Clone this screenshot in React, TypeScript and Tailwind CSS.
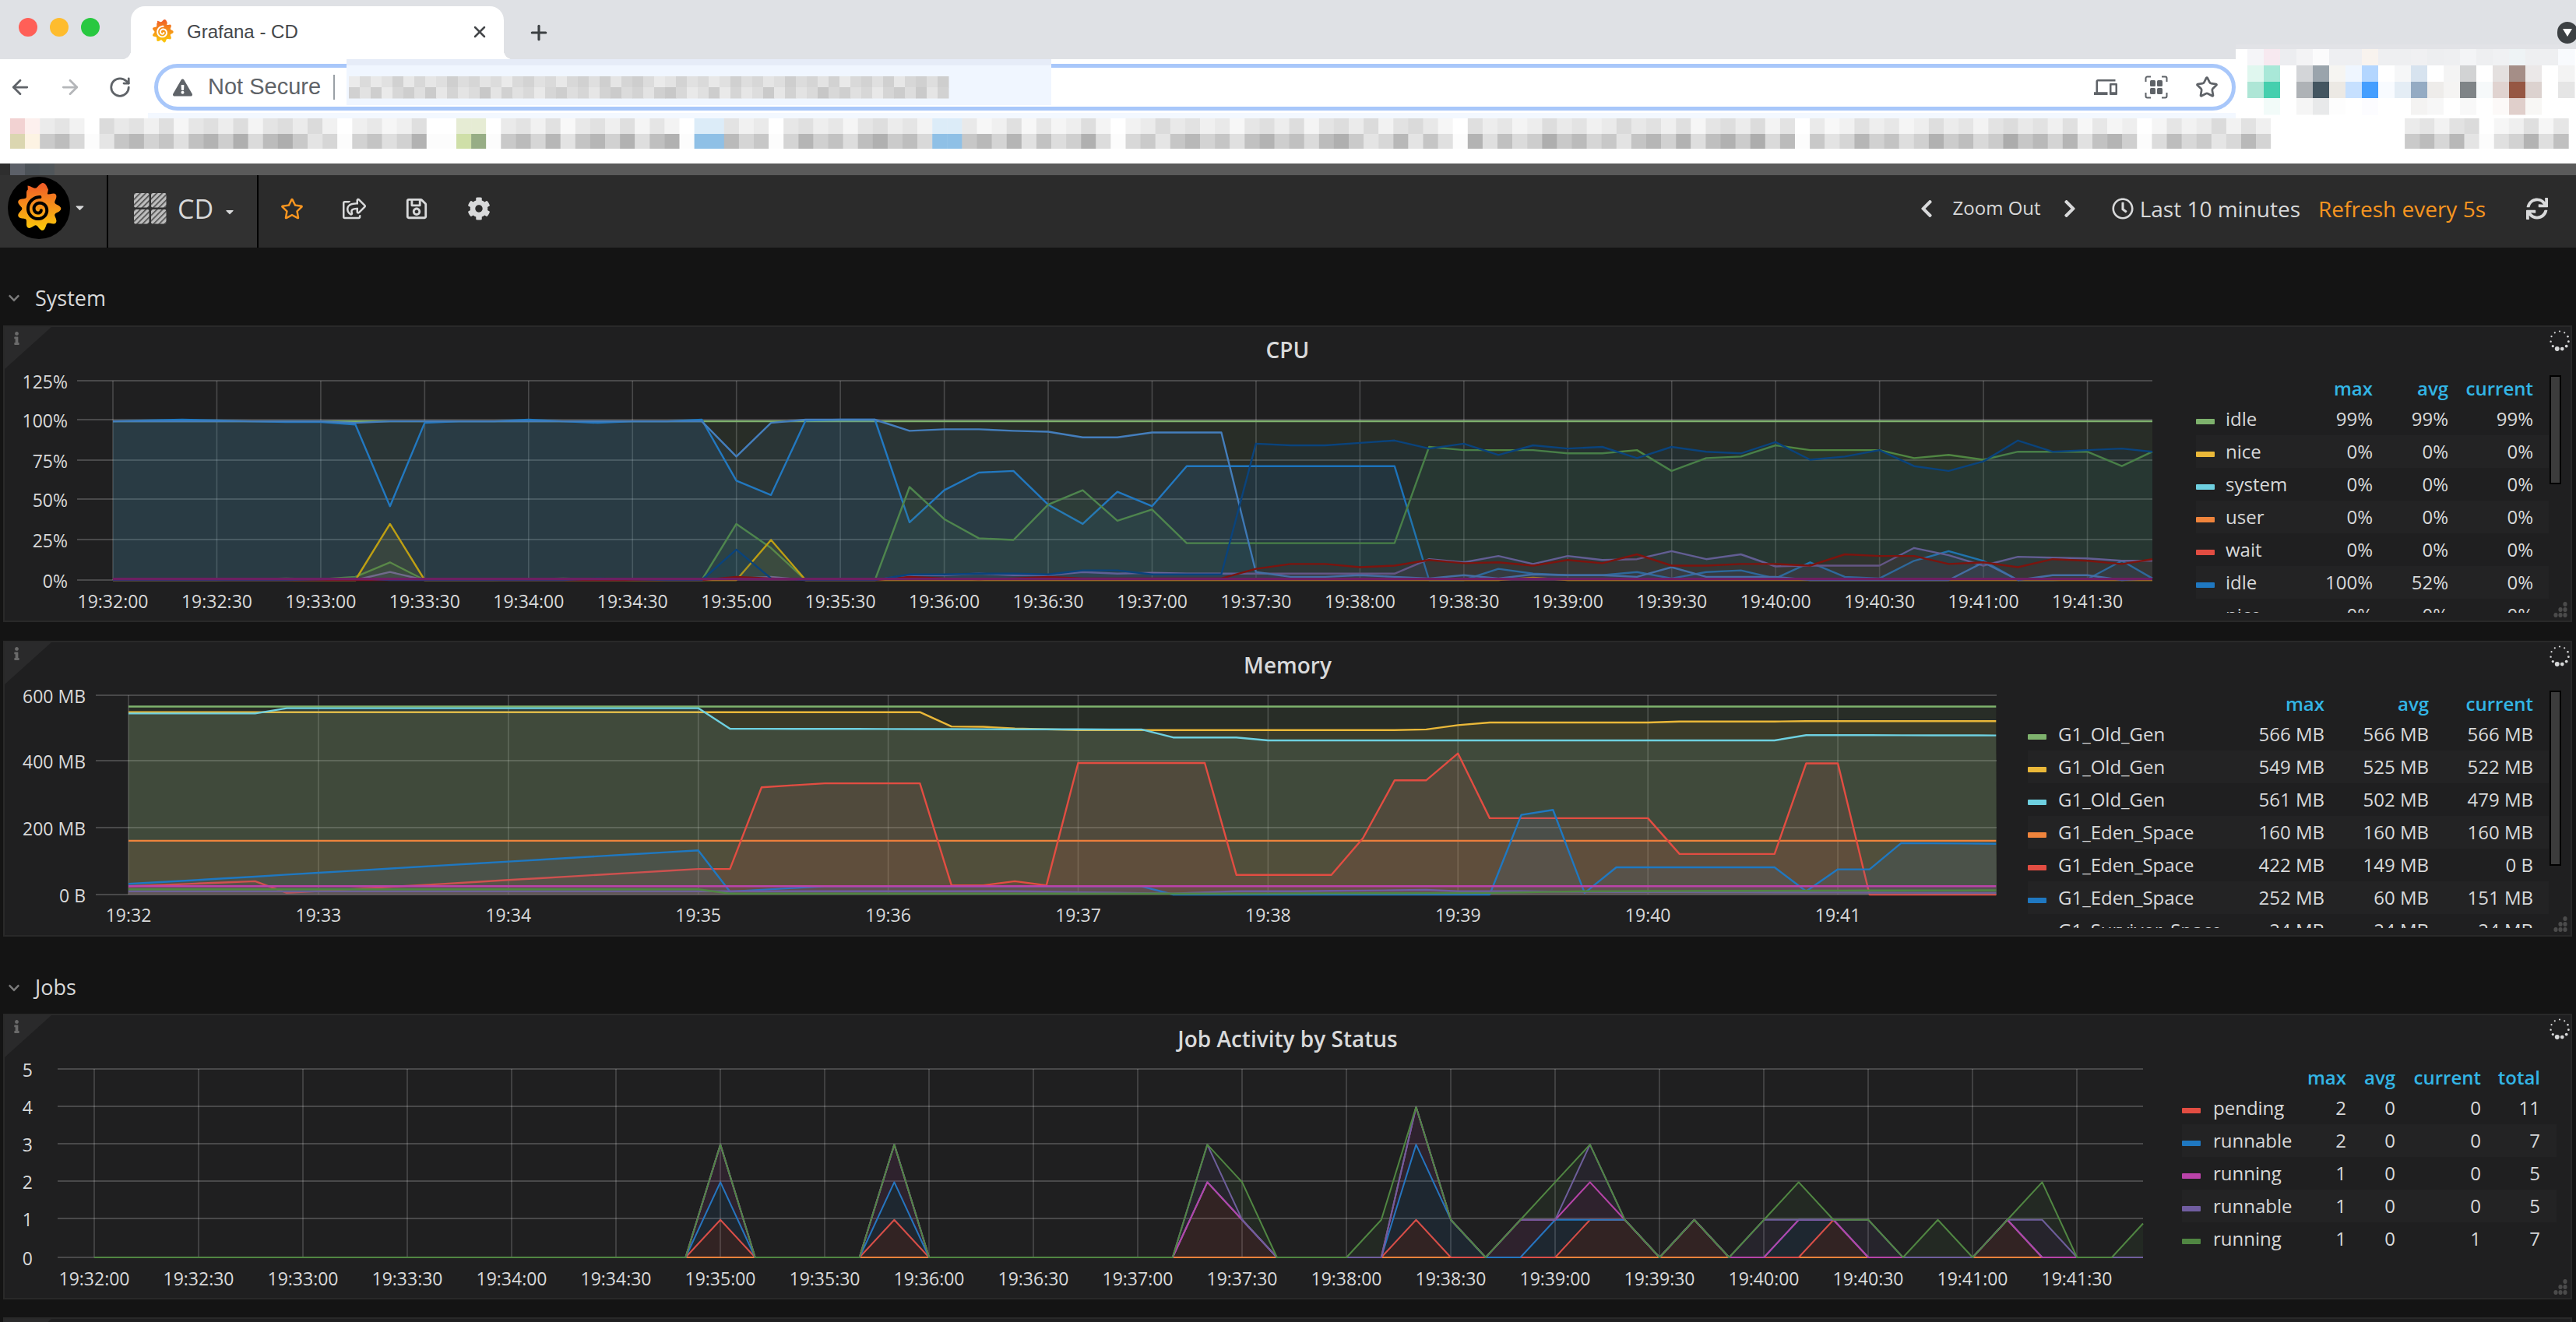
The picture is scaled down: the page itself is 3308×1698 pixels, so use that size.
import React from "react";
import {
  FaRegStar, FaRegShareSquare, FaRegSave, FaCog, FaChevronLeft, FaChevronRight,
  FaRegClock, FaSync, FaCaretDown, FaInfo, FaChevronDown, FaExclamationTriangle,
} from "react-icons/fa";
import { MdDevices } from "react-icons/md";
import { ArrowLeft, ArrowRight, RotateCw, X, Plus, Star } from "lucide-react";

const h = (i: number) => ((i * 2654435761) >>> 0) % 1000 / 1000;
const gray = (v: number) => {
  const c = Math.max(0, Math.min(255, Math.round(v)));
  return `rgb(${c},${c},${c})`;
};

/* piecewise linear series: flat list of n,value pairs */
const lin = (...p: number[]) => {
  const out: number[] = [];
  for (let n = 0; n < 60; n++) {
    let v = p[p.length - 1];
    for (let k = 0; k + 2 < p.length; k += 2) {
      if (n >= p[k] && n <= p[k + 2]) {
        v = p[k + 1] + ((p[k + 3] - p[k + 1]) * (n - p[k])) / (p[k + 2] - p[k] || 1);
        break;
      }
    }
    out.push(v);
  }
  return out;
};
const seq = (start: number, vals: number[]) => vals.flatMap((v, i) => [start + i, v]);

type Series = { c: string; v: number[]; w?: number };

const cpuSeries: Series[] = [
  { c: "#7EB26D", v: lin(0, 99, 59, 99) },
  { c: "#1F78C1", v: lin(...seq(0, [99, 99.5, 100, 99.5, 99, 98.5, 98.5, 97, 46, 98, 99, 99, 100, 99, 98, 99, 99, 100, 62, 53, 99.5, 100, 100, 36, 56, 67, 68, 47, 35, 55, 46, 71, 71, 71, 71, 71, 71, 71, 0, 0, 7, 4, 3, 3, 5, 1, 5, 6, 1, 11, 2, 1, 12, 18, 12, 0, 0, 0.5, 12, 1])) },
  { c: "#705DA0", v: lin(...seq(0, [0, 0, 0, 0, 0, 0, 0, 0, 5, 0, 0, 0, 0, 0, 0, 0, 0, 0, 1, 2, 0, 0, 0, 3, 3, 4, 3, 3, 5, 4, 4.5, 4, 4, 4, 4, 4, 4, 4, 13, 11, 15, 10, 15, 12.5, 13, 18, 13, 16, 8.5, 9, 9, 9, 20, 15.5, 9, 14.5, 14, 13.5, 12, 12])) },
  { c: "#508642", v: lin(...seq(0, [0, 0, 0, 0, 0.5, 1, 0.5, 2, 11, 0, 0, 0, 0.5, 1, 0.5, 0, 0, 0, 35, 20, 0, 0, 0, 58, 38, 26, 25, 47, 56, 37, 44, 23, 23, 23, 23, 23, 23, 23, 83, 81, 81, 81, 79, 79, 81, 68, 76, 77, 84, 81, 81, 81, 76, 78, 75, 80, 80, 80, 71, 80])) },
  { c: "#CCA300", v: lin(...seq(0, [0, 0, 0, 0, 0, 0, 0, 0, 35, 0, 0, 0, 0, 0, 0, 0, 0, 0, 0, 25, 0, 0, 0, 0, 0, 0, 0, 0, 0, 0, 0, 0, 0, 0, 0, 0, 0, 0, 0, 0, 0, 1.5, 0, 0, 0, 0, 0, 0, 0, 0, 0, 0, 0, 0, 0, 0, 0, 0, 0, 0])) },
  { c: "#447EBC", v: lin(...seq(0, [99, 99, 99, 99, 99, 99, 99, 98, 99, 99, 99, 99, 99, 99, 99, 99, 99, 99, 77, 98, 100, 100, 100, 93, 94, 94, 93, 92.5, 89, 89, 92, 92, 92, 5, 2, 2, 3, 2, 1, 3, 1, 3.5, 3, 3, 2, 8, 2, 2, 2, 0, 0, 0, 0, 0, 11, 0, 3, 3, 0, 1])) },
  { c: "#890F02", v: lin(...seq(0, [0, 0, 0, 0, 0, 0, 0, 0, 0, 0, 0, 0, 0, 0, 0, 0, 0, 0, 2, 1, 0, 0, 0, 2, 1, 0.5, 1, 2, 1, 1, 1, 1, 1, 7, 10, 10, 8, 9, 12.5, 10.5, 11, 9, 12.5, 10.5, 16, 9, 9, 10, 10, 9, 16, 15, 15, 10, 11, 8, 13, 12, 10, 13])) },
  { c: "#0A437C", v: lin(...seq(0, [0, 0, 0, 0, 0, 0, 0.5, 1, 0, 0, 0, 0, 0, 0, 1, 0.5, 0, 0, 19, 1, 0, 0, 0, 3.5, 3.5, 4, 4, 3.5, 6, 6, 3.5, 3.5, 3.5, 85, 84, 84, 85.5, 87, 82, 85, 78, 84, 82, 83, 76, 83, 80, 79, 86, 75, 77, 81, 71, 68, 74, 87, 80, 81, 82, 80])) },
  { c: "#6D1F62", v: lin(0, 0.6, 59, 0.6), w: 3.5 },
];

const memSeries: Series[] = [
  { c: "#7EB26D", v: lin(0, 566, 59, 566) },
  { c: "#EAB839", v: lin(0, 549, 25, 549, 26, 506, 27, 505, 28, 500, 30, 495, 40, 495, 41, 497, 42, 510, 43, 518, 48, 518, 49, 521, 52, 521, 53, 522, 59, 522) },
  { c: "#6ED0E0", v: lin(0, 545, 4, 545, 5, 561, 18, 561, 19, 499, 32, 497, 33, 473, 35, 473, 36, 464, 52, 464, 53, 480, 59, 479) },
  { c: "#EF843C", v: lin(0, 162, 59, 162) },
  { c: "#E24D42", v: lin(0, 25, 4, 40, 5, 5, 18, 77, 19, 77, 20, 323, 22, 335, 25, 335, 26, 28, 27, 28, 28, 40, 29, 28, 30, 396, 34, 396, 35, 59, 38, 59, 39, 170, 40, 344, 41, 344, 42, 425, 43, 230, 48, 230, 49, 122, 52, 122, 53, 395, 54, 395, 55, 0, 59, 0) },
  { c: "#1F78C1", v: lin(0, 32, 4, 54, 5, 60, 18, 133, 19, 9, 22, 25, 32, 25, 33, 0, 43, 0, 44, 240, 45, 255, 46, 5, 47, 82, 52, 82, 53, 10, 54, 76, 55, 76, 56, 155, 59, 153) },
  { c: "#BA43A9", v: lin(0, 25, 59, 25) },
  { c: "#705DA0", v: lin(0, 10, 28, 10, 33, 3, 35, 10, 37, 10, 41, 14, 42, 10, 44, 10, 46, 8, 59, 5) },
  { c: "#508642", v: lin(0, 16, 18, 16, 19, 3, 35, 3, 43, 5, 46, 10, 59, 13) },
];

const J: Record<number, number[]> = {
  18: [1, 2, 3, 3, 3], 23: [1, 2, 3, 3, 3], 32: [2, 2, 2, 3, 3], 33: [1, 1, 1, 1, 2], 37: [0, 0, 0, 0, 1],
  38: [1, 3, 4, 4, 4], 39: [0, 1, 1, 1, 1], 41: [0, 0, 1, 1, 1], 42: [0, 1, 1, 1, 2], 43: [1, 1, 2, 3, 3],
  44: [1, 1, 1, 1, 1], 46: [1, 1, 1, 1, 1], 48: [0, 0, 0, 1, 1], 49: [0, 1, 1, 1, 2], 50: [1, 1, 1, 1, 1],
  51: [0, 0, 0, 1, 1], 53: [0, 0, 0, 0, 1], 55: [1, 1, 1, 1, 1], 56: [0, 0, 0, 1, 2], 59: [0, 0, 0, 0, 0.9],
};
const jv = (k: number) => Array.from({ length: 60 }, (_, n) => (J[n] ? J[n][k] : 0));
const jobSeries: Series[] = [
  { c: "#EF843C", v: jv(0).map(() => 0) },
  { c: "#E24D42", v: jv(0) },
  { c: "#1F78C1", v: jv(1) },
  { c: "#BA43A9", v: jv(2) },
  { c: "#705DA0", v: jv(3) },
  { c: "#508642", v: jv(4) },
];

type ChartProps = {
  left: number; top: number; width: number; height: number;
  x0: number; step: number; y0: number; perUnit: number; xEnd: number; gridLeft: number;
  hTicks: [number, string][]; vFirst: number; vStep: number; vLabels: string[];
  labelY: number; yLabelX: number; series: Series[]; sw: number; stacked?: boolean;
};

function Chart(p: ChartProps) {
  const gridTop = Math.min(...p.hTicks.map((t) => t[0]));
  const toPts = (s: Series) =>
    s.v.map((v, n) => `${Math.min(p.x0 + n * p.step, p.xEnd).toFixed(1)},${(p.y0 - v * p.perUnit).toFixed(1)}`);
  return (
    <svg width={p.width} height={p.height} viewBox={`${p.left} ${p.top} ${p.width} ${p.height}`} className="block shrink-0 overflow-visible">
      {p.hTicks.map(([y]) => (
        <line key={y} x1={p.gridLeft} x2={p.xEnd} y1={y} y2={y} stroke="#fff" strokeOpacity={0.19} strokeWidth={2} />
      ))}
      {p.vLabels.map((_, i) => {
        const x = p.vFirst + i * p.vStep;
        return <line key={i} x1={x} x2={x} y1={gridTop} y2={p.y0} stroke="#fff" strokeOpacity={0.19} strokeWidth={1.6} />;
      })}
      {p.series.map((s, i) => {
        const pts = toPts(s);
        const lower = p.stacked && i > 0 ? toPts(p.series[i - 1]).reverse().join(" ") : `${p.xEnd},${p.y0} ${p.x0},${p.y0}`;
        return (
          <g key={i}>
            <polygon points={`${pts.join(" ")} ${lower}`} fill={s.c} fillOpacity={0.1} />
            <polyline points={pts.join(" ")} fill="none" stroke={s.c} strokeWidth={s.w ?? p.sw} strokeLinejoin="round" />
          </g>
        );
      })}
      {p.hTicks.map(([y, t]) => (
        <text key={t} x={p.yLabelX} y={y + 1} textAnchor="end" dominantBaseline="central" fontSize={23} fill="#d8d9da">{t}</text>
      ))}
      {p.vLabels.map((t, i) => (
        <text key={t} x={p.vFirst + i * p.vStep} y={p.labelY} textAnchor="middle" dominantBaseline="central" fontSize={23} fill="#d8d9da">{t}</text>
      ))}
    </svg>
  );
}

const secLabels = ["19:32:00", "19:32:30", "19:33:00", "19:33:30", "19:34:00", "19:34:30", "19:35:00", "19:35:30", "19:36:00", "19:36:30", "19:37:00", "19:37:30", "19:38:00", "19:38:30", "19:39:00", "19:39:30", "19:40:00", "19:40:30", "19:41:00", "19:41:30"];
const minLabels = ["19:32", "19:33", "19:34", "19:35", "19:36", "19:37", "19:38", "19:39", "19:40", "19:41"];

type Row = { c: string; name: string; vals: string[] };

function Legend({ grid, headers, rows, widthClass, heightClass }: { grid: string; headers: string[]; rows: Row[]; widthClass: string; heightClass: string }) {
  return (
    <div className={`${widthClass} ${heightClass} shrink-0 overflow-hidden text-[24px] leading-none whitespace-nowrap`}>
      <div className={`${grid} h-[37px] items-center font-semibold text-[#33b5e5] text-right`}>
        <span />
        <span />
        {headers.map((t) => <span key={t}>{t}</span>)}
      </div>
      {rows.map((r, i) => (
        <div key={i} className={`${grid} h-[42px] items-center text-[#d8d9da] ${i % 2 === 1 ? "bg-[#232324]" : ""}`}>
          <span className="block w-6 h-[7px] rounded-[1px] mt-[7px]" style={{ backgroundColor: r.c }} />
          <span>{r.name}</span>
          {r.vals.map((v, k) => <span key={k} className="text-right">{v}</span>)}
        </div>
      ))}
    </div>
  );
}

function Scrollbar({ className }: { className: string }) {
  return <div className={`w-[15px] shrink-0 bg-[#3c3c3c] border-2 border-black ${className}`} />;
}

function Spinner() {
  return (
    <svg width="28" height="28" viewBox="-14 -14 28 28" className="absolute top-[3px] right-0">
      {Array.from({ length: 11 }, (_, i) => {
        const a = (i / 11) * Math.PI * 2 - Math.PI / 2;
        const r = [1.1, 1.1, 1.3, 1.4, 1.9, 2.4, 3, 1.6, 1.2, 1.1, 1.1][i];
        return <circle key={i} cx={Math.cos(a) * 11.5} cy={Math.sin(a) * 11.5} r={r} fill="#d8d9da" />;
      })}
    </svg>
  );
}

function ResizeDots() {
  return (
    <svg width="20" height="22" viewBox="0 0 20 22" className="absolute bottom-[2px] right-[2px]">
      {[[15, 3], [15, 10], [9, 10], [15, 17], [9, 17], [3, 17]].map(([x, y], i) => (
        <ellipse key={i} cx={x} cy={y} rx={2.6} ry={3} fill="#4b4b4b" />
      ))}
    </svg>
  );
}

function Corner() {
  return (
    <div className="absolute top-0 left-0">
      <svg width="60" height="54" viewBox="0 0 60 54" className="block">
        <polygon points="0,0 60,0 0,54" fill="#2a2a2b" />
      </svg>
      <FaInfo size={17} color="#6a6a6a" className="absolute top-[6px] left-[7px]" />
    </div>
  );
}

function Panel({ className, title, titleClass, children }: { className: string; title: string; titleClass: string; children: React.ReactNode }) {
  return (
    <div className={`relative ml-1 mr-[5px] bg-[#1f1f20] border-2 border-[#292929] ${className}`}>
      <Corner />
      <Spinner />
      <ResizeDots />
      <div className={`flex items-center justify-center font-semibold text-[28px] text-[#d8d9da] ${titleClass}`}>{title}</div>
      {children}
    </div>
  );
}

function RowHead({ label, className }: { label: string; className: string }) {
  return (
    <div className={`flex items-center gap-[19px] pl-[10px] ${className}`}>
      <FaChevronDown size={16} color="#7b7b7b" />
      <span className="text-[27px] text-[#d8d9da]">{label}</span>
    </div>
  );
}

/* logo */
const blob = (() => {
  const pts: string[] = [];
  for (let i = 0; i < 96; i++) {
    const a = (i / 96) * Math.PI * 2;
    const r = 25 + 3.4 * Math.cos(9 * a) + (Math.abs(a - Math.PI * 1.5) < 0.5 ? 5 : 0);
    pts.push(`${(40 + Math.cos(a) * r).toFixed(1)},${(41 + Math.sin(a) * r).toFixed(1)}`);
  }
  return pts.join(" ");
})();
const spiral = (() => {
  const pts: string[] = [];
  for (let i = 0; i <= 70; i++) {
    const t = i / 70;
    const a = t * Math.PI * 3.4 + 0.4;
    const r = 3 + t * 13;
    pts.push(`${(40 + Math.cos(a) * r).toFixed(1)},${(42 + Math.sin(a) * r).toFixed(1)}`);
  }
  return pts.join(" ");
})();

function Logo({ size, disc, id }: { size: number; disc: boolean; id: string }) {
  return (
    <svg width={size} height={size} viewBox={disc ? "0 0 80 80" : "10 8 60 66"} className="block shrink-0">
      <defs>
        <linearGradient id={id} x1="0" y1="0" x2="0" y2="1">
          <stop offset="0" stopColor="#f05a28" />
          <stop offset="1" stopColor="#fbca0a" />
        </linearGradient>
      </defs>
      {disc && <circle cx="40" cy="40" r="40" fill="#000" />}
      <polygon points={blob} fill={`url(#${id})`} />
      <polyline points={spiral} fill="none" stroke={disc ? "#000" : "#fff"} strokeWidth="4" strokeLinecap="round" />
    </svg>
  );
}

function DashIcon() {
  return (
    <svg width="42" height="40" viewBox="0 0 42 40" className="block shrink-0">
      <defs>
        <pattern id="hatch" width="5" height="5" patternUnits="userSpaceOnUse" patternTransform="rotate(-45)">
          <rect width="5" height="5" fill="#bdbdbd" />
          <rect width="5" height="1.6" fill="#4a4a4a" />
        </pattern>
      </defs>
      <rect x="0" y="0" width="19.5" height="18.5" rx="2" fill="url(#hatch)" />
      <rect x="22" y="0" width="19.5" height="18.5" rx="2" fill="url(#hatch)" />
      <rect x="0" y="21" width="19.5" height="18.5" rx="2" fill="url(#hatch)" />
      <rect x="22" y="21" width="19.5" height="18.5" rx="2" fill="url(#hatch)" />
    </svg>
  );
}

function ExtIcon() {
  return (
    <svg width="30" height="30" viewBox="0 0 30 30" fill="none" className="block shrink-0">
      <path d="M8 1.5H3.5a2 2 0 0 0-2 2V8M22 1.5h4.5a2 2 0 0 1 2 2V8M8 28.5H3.5a2 2 0 0 1-2-2V22M22 28.5h4.5a2 2 0 0 0 2-2V22" stroke="#5f6368" strokeWidth="2" />
      <rect x="7" y="6" width="7" height="8" rx="1.5" fill="#5f6368" />
      <rect x="16" y="6" width="7" height="8" rx="1.5" fill="#5f6368" />
      <rect x="7" y="16" width="7" height="8" rx="1.5" fill="#5f6368" />
      <rect x="16" y="16" width="7" height="8" rx="1.5" fill="#5f6368" />
    </svg>
  );
}

/* pixelated (blurred out) regions */
function UrlMosaic() {
  const cells = Array.from({ length: 55 }, (_, i) => i);
  return (
    <svg width="905" height="59" viewBox="0 0 905 59" className="absolute top-[76px] left-[445px]">
      <rect width="905" height="59" fill="#f0f6ff" />
      <rect width="905" height="8" fill="#e6ecf8" />
      {cells.map((i) => (
        <g key={i}>
          <rect x={3 + i * 14} y={22} width={14.5} height={14.5} fill={gray(205 + h(i + 3) * 30)} />
          <rect x={3 + i * 14} y={36} width={14.5} height={14.5} fill={gray(198 + h(i + 71) * 36)} />
        </g>
      ))}
    </svg>
  );
}

const extRows = [
  ["#f5f5f8", "#f7e9f0", "#ecedf0", "#f3f3f5", "#fbfbfc", "#eeeff2", "#eeeff2", "#f8f3ee", "#eeeff1", "#eeeff1", "#f0f0f2", "#edeef0", "#eeeff1", "#f3f4f6", "#eeeff1", "#f0f1f3", "#eef3f5", "#eeeff1", "#eeeff1", "#f8fafd"],
  ["#e0f7ef", "#a9e8d8", "#ffffff", "#d3d5d8", "#9aa4ac", "#f6f5f2", "#eff6ff", "#b3d6ff", "#ffffff", "#f6f7f8", "#d7e3ef", "#ffffff", "#f4f4f4", "#d2d3d4", "#ffffff", "#e4e0df", "#a58e87", "#ebe8e8", "#ffffff", "#f3f3f3"],
  ["#aee6d6", "#45cfae", "#ffffff", "#aeb2b6", "#435560", "#ece9e4", "#c6e0ff", "#449eff", "#f8fbff", "#e4edf5", "#94abc3", "#eeecea", "#f5f4f3", "#7f8487", "#f6f9fa", "#e0d3d0", "#965743", "#dcd2cf", "#ffffff", "#e5e5e5"],
  ["#ffffff", "#f2fbf9", "#ffffff", "#f5f5f5", "#e8e9ea", "#fdfdfd", "#ffffff", "#fcfcff", "#ffffff", "#ffffff", "#f4f3f2", "#f7f7f7", "#ffffff", "#f8f8f8", "#ffffff", "#fcf9f8", "#e0cfcb", "#f8f7f5", "#ffffff", "#ffffff"],
];

function ExtMosaic() {
  return (
    <svg width="437" height="92" viewBox="0 0 437 92" className="absolute top-[57px] left-[2871px]">
      <rect width="437" height="92" fill="#ffffff" />
      <rect width="437" height="6" fill="#e2e3e7" />
      {extRows.map((r, ri) =>
        r.map((c, ci) => <rect key={`${ri}-${ci}`} x={15 + ci * 21} y={6 + ri * 21} width={21.5} height={21.5} fill={c} />),
      )}
    </svg>
  );
}

function BookmarkMosaic() {
  const cells = Array.from({ length: 172 }, (_, i) => i);
  const color = (i: number, row: number) => {
    if (i >= 152 && i <= 160) return "#ffffff";
    if (i % 23 === 5 || i === 22 || i === 29 || i === 32 || i === 45) return row ? "#fcfcfc" : "#ffffff";
    if (i === 0) return row ? "#dbd6b0" : "#f2d2d2";
    if (i === 1) return row ? "#fdf3e3" : "#fdf0ee";
    if (i === 30) return row ? "#cfdfa8" : "#e6ecd4";
    if (i === 31) return row ? "#97ad85" : "#e6ecd4";
    if (i === 46 || i === 47 || i === 62 || i === 63) return row ? "#8fc0e6" : "#dcecf8";
    return row ? gray(172 + h(i + 11) * 58) : gray(218 + h(i + 37) * 30);
  };
  return (
    <svg width="3308" height="65" viewBox="0 0 3308 65" className="block">
      <rect x="190" width="2681" height="7" fill="#f3f8ff" />
      {cells.map((i) => (
        <g key={i}>
          <rect x={13 + i * 19.1} y={7} width={19.6} height={20} fill={color(i, 0)} />
          <rect x={13 + i * 19.1} y={27} width={19.6} height={19} fill={color(i, 1)} />
        </g>
      ))}
    </svg>
  );
}

const grid1 = "grid grid-cols-[38px_89px_100px_97px_109px] pr-5";
const grid2 = "grid grid-cols-[39px_212px_130px_134px_134px] pr-5";
const grid3 = "grid grid-cols-[40px_111px_60px_63px_110px_76px] pr-[21px]";

const cpuRows: Row[] = [
  { c: "#7EB26D", name: "idle", vals: ["99%", "99%", "99%"] },
  { c: "#EAB839", name: "nice", vals: ["0%", "0%", "0%"] },
  { c: "#6ED0E0", name: "system", vals: ["0%", "0%", "0%"] },
  { c: "#EF843C", name: "user", vals: ["0%", "0%", "0%"] },
  { c: "#E24D42", name: "wait", vals: ["0%", "0%", "0%"] },
  { c: "#1F78C1", name: "idle", vals: ["100%", "52%", "0%"] },
  { c: "#BA43A9", name: "nice", vals: ["0%", "0%", "0%"] },
];
const memRows: Row[] = [
  { c: "#7EB26D", name: "G1_Old_Gen", vals: ["566 MB", "566 MB", "566 MB"] },
  { c: "#EAB839", name: "G1_Old_Gen", vals: ["549 MB", "525 MB", "522 MB"] },
  { c: "#6ED0E0", name: "G1_Old_Gen", vals: ["561 MB", "502 MB", "479 MB"] },
  { c: "#EF843C", name: "G1_Eden_Space", vals: ["160 MB", "160 MB", "160 MB"] },
  { c: "#E24D42", name: "G1_Eden_Space", vals: ["422 MB", "149 MB", "0 B"] },
  { c: "#1F78C1", name: "G1_Eden_Space", vals: ["252 MB", "60 MB", "151 MB"] },
  { c: "#BA43A9", name: "G1_Survivor_Space", vals: ["24 MB", "24 MB", "24 MB"] },
];
const jobRows: Row[] = [
  { c: "#E24D42", name: "pending", vals: ["2", "0", "0", "11"] },
  { c: "#1F78C1", name: "runnable", vals: ["2", "0", "0", "7"] },
  { c: "#BA43A9", name: "running", vals: ["1", "0", "0", "5"] },
  { c: "#705DA0", name: "runnable", vals: ["1", "0", "0", "5"] },
  { c: "#508642", name: "running", vals: ["1", "0", "1", "7"] },
];

export default function App() {
  return (
    <div className="relative w-[3308px] h-[1698px] overflow-hidden bg-[#141414] font-['Open_Sans',sans-serif]">
      {/* browser chrome */}
      <div className="font-['Liberation_Sans',sans-serif] bg-white">
        <div className="flex items-end h-[76px] bg-[#dfe1e5]">
          <div className="flex self-center gap-4 pl-6 w-[156px] -mt-[6px]">
            <span className="w-6 h-6 rounded-full bg-[#ff5f57]" />
            <span className="w-6 h-6 rounded-full bg-[#febc2e]" />
            <span className="w-6 h-6 rounded-full bg-[#28c840]" />
          </div>
          <span className="w-3 h-3 bg-[radial-gradient(circle_at_0_0,#dfe1e5_12px,#ffffff_12.5px)]" />
          <div className="flex items-center w-[479px] h-[68px] bg-white rounded-t-[18px] pl-[25px] pr-[19px] pb-[2px]">
            <Logo size={32} disc={false} id="favicon" />
            <span className="ml-[15px] text-[24px] text-[#45474a]">Grafana - CD</span>
            <X size={24} color="#45474a" strokeWidth={2.5} className="ml-auto" />
          </div>
          <span className="w-3 h-3 bg-[radial-gradient(circle_at_100%_0,#dfe1e5_12px,#ffffff_12.5px)]" />
          <Plus size={30} color="#3c4043" strokeWidth={2.5} className="self-center ml-[18px] mt-[8px]" />
          <div className="flex items-center justify-center ml-auto self-start mt-[28px] -mr-[2px] w-[26px] h-[28px] rounded-full bg-[#3c4043]">
            <span className="w-0 h-0 border-x-[6px] border-x-transparent border-t-[10px] border-t-white" />
          </div>
        </div>
        <div className="flex items-start h-[69px] pt-[6px]">
          <div className="flex items-center h-[60px] pl-[11px] gap-[34px] w-[198px]">
            <ArrowLeft size={30} color="#5f6368" strokeWidth={2.2} />
            <ArrowRight size={30} color="#b4b6b9" strokeWidth={2.2} />
            <RotateCw size={30} color="#5f6368" strokeWidth={2.2} />
          </div>
          <div className="flex items-center w-[2673px] h-[60px] rounded-full border-[5px] border-[#a8c7fa] bg-white pl-[19px] pr-[17px]">
            <FaExclamationTriangle size={25} color="#5f6368" />
            <span className="ml-[20px] text-[29px] text-[#5f6368] whitespace-nowrap">Not Secure</span>
            <span className="ml-[16px] w-[2px] h-[32px] bg-[#9aa0a6]" />
            <div className="ml-auto flex items-center gap-[35px]">
              <MdDevices size={30} color="#5f6368" />
              <ExtIcon />
              <Star size={30} color="#5f6368" strokeWidth={2.2} />
            </div>
          </div>
        </div>
        <div className="h-[65px] overflow-hidden"><BookmarkMosaic /></div>
      </div>
      <UrlMosaic />
      <ExtMosaic />
      <div className="flex h-[15px] bg-[#5a5a5a]">
        <span className="w-[13px] bg-[#2e2e2e]" />
        <span className="w-[19px] bg-[#5c6068]" />
        <span className="w-[19px] bg-[#4c5258]" />
        <span className="w-[19px] bg-[#50565a]" />
      </div>

      {/* grafana navbar */}
      <div className="flex items-center h-[93px] bg-[#2b2b2b] text-[#d8d9da]">
        <div className="flex items-center h-full w-[139px] bg-[#323232] border-r-2 border-black pl-[10px] pb-[10px]">
          <Logo size={80} disc id="mainlogo" />
          <FaCaretDown size={17} color="#d8d9da" className="ml-[4px]" />
        </div>
        <div className="flex items-center h-full w-[193px] bg-[#313131] border-r-2 border-black pl-[33px] pb-2">
          <DashIcon />
          <span className="ml-[14px] text-[34px] leading-none">CD</span>
          <FaCaretDown size={16} color="#d8d9da" className="ml-[13px] mt-[8px]" />
        </div>
        <div className="flex items-center h-full pl-[28px] gap-[50px] pb-2">
          <FaRegStar size={30} color="#f79520" />
          <FaRegShareSquare size={30} />
          <FaRegSave size={30} />
          <FaCog size={30} />
        </div>
        <div className="flex items-center h-full ml-auto pr-[36px] pb-2">
          <FaChevronLeft size={26} />
          <span className="ml-[21px] text-[24px] leading-none -mt-[2px]">Zoom Out</span>
          <FaChevronRight size={26} className="ml-[24px]" />
          <FaRegClock size={28} className="ml-[41px]" />
          <span className="ml-[8px] text-[28px] leading-none">Last 10 minutes</span>
          <span className="ml-[23px] text-[28px] leading-none text-[#f79520]">Refresh every 5s</span>
          <FaSync size={28} className="ml-[52px]" />
        </div>
      </div>

      {/* System */}
      <RowHead label="System" className="h-[100px] pt-[30px]" />
      <Panel className="h-[381px]" title="CPU" titleClass="h-[58px]">
        <div className="flex">
          <Chart left={6} top={478} width={2770} height={319} x0={145} step={44.48} y0={745} perUnit={2.06} xEnd={2764} gridLeft={99}
            hTicks={[[489, "125%"], [539, "100%"], [591, "75%"], [641, "50%"], [693, "25%"], [745, "0%"]]}
            vFirst={145} vStep={133.45} vLabels={secLabels} labelY={772} yLabelX={87} series={cpuSeries} sw={2.4} />
          <div className="flex mt-[2px] ml-[44px]">
            <Legend grid={grid1} headers={["max", "avg", "current"]} rows={cpuRows} widthClass="w-[453px]" heightClass="h-[307px]" />
            <Scrollbar className="h-[140px] ml-px mt-[2px]" />
          </div>
        </div>
      </Panel>

      {/* Memory */}
      <Panel className="h-[380px] mt-6" title="Memory" titleClass="h-[60px] pb-[2px]">
        <div className="flex">
          <Chart left={6} top={885} width={2560} height={316} x0={165} step={40.65} y0={1149} perUnit={0.4267} xEnd={2564} gridLeft={123}
            hTicks={[[893, "600 MB"], [977, "400 MB"], [1063, "200 MB"], [1149, "0 B"]]}
            vFirst={165} vStep={243.9} vLabels={minLabels} labelY={1175} yLabelX={110} series={memSeries} sw={2.4} />
          <div className="flex ml-[38px]">
            <Legend grid={grid2} headers={["max", "avg", "current"]} rows={memRows} widthClass="w-[669px]" heightClass="h-[307px]" />
            <Scrollbar className="h-[225px] ml-px mt-[2px]" />
          </div>
        </div>
      </Panel>

      {/* Jobs */}
      <RowHead label="Jobs" className="h-[99px] pt-[32px]" />
      <Panel className="h-[367px]" title="Job Activity by Status" titleClass="h-[62px] pb-[2px]">
        <div className="flex">
          <Chart left={6} top={1366} width={2760} height={301} x0={121} step={44.67} y0={1615} perUnit={48.3} xEnd={2752} gridLeft={74}
            hTicks={[[1373, "5"], [1421, "4"], [1469, "3"], [1517, "2"], [1565, "1"], [1615, "0"]]}
            vFirst={121} vStep={134} vLabels={secLabels} labelY={1642} yLabelX={42} series={jobSeries} sw={2} stacked />
          <div className="ml-[36px] -mt-[1px]">
            <Legend grid={grid3} headers={["max", "avg", "current", "total"]} rows={jobRows} widthClass="w-[481px]" heightClass="h-[260px]" />
          </div>
        </div>
      </Panel>
      <div className="relative h-10 ml-1 mr-[5px] mt-[23px] bg-[#1f1f20] border-2 border-[#292929]">
        <Corner />
      </div>
    </div>
  );
}
